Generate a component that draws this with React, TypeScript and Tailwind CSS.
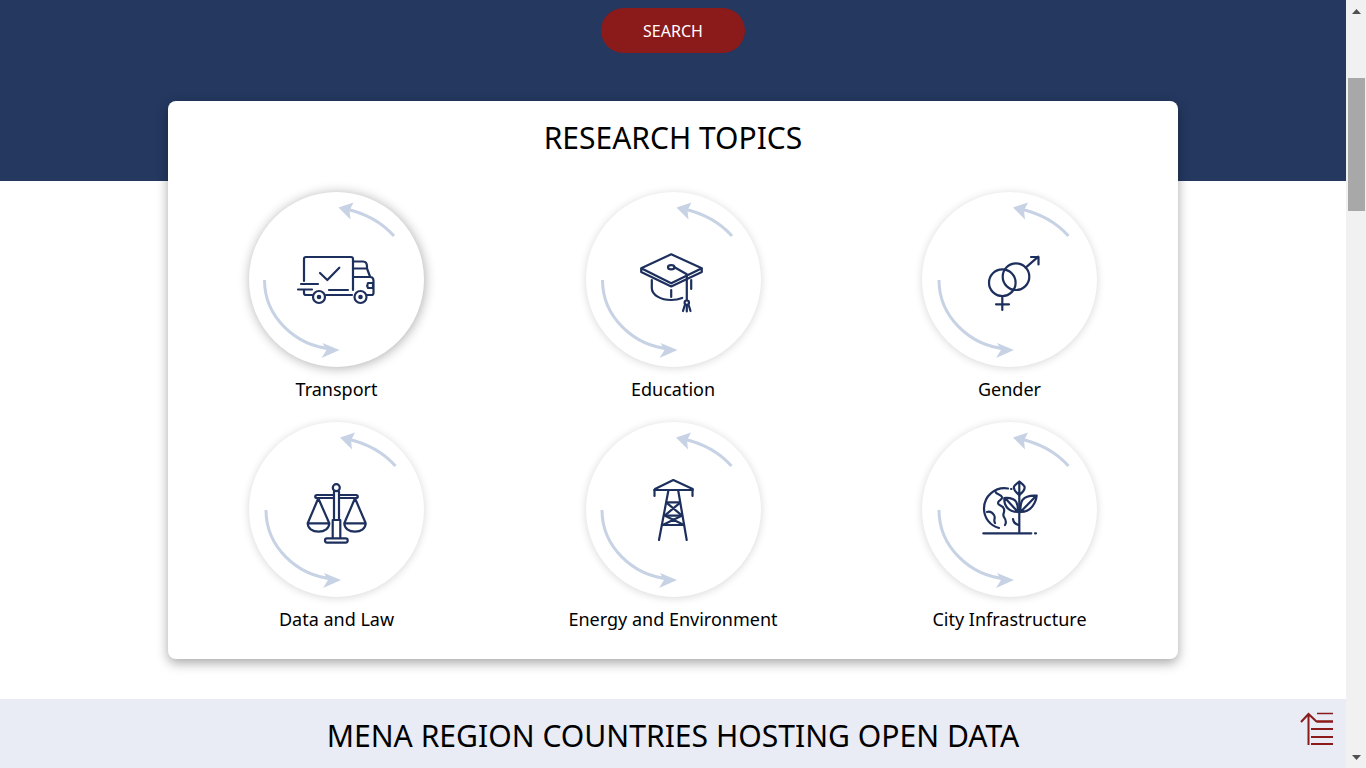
const NAVY = "#1d2f5c";

function TruckIcon() {
  return (
    <g transform="translate(41 53)">
      <path d="M14 36V14q0-2 2-2h45q2 0 2 2v31M11 39h17M8 44.500h14M14 45v3q0 2 2 2h7M39 45h19M36 50h26" />
      <path d="M63 16.500h10q4 0 4 5v2H63M77 23.500l3 8M63 32h17q3.500 0 3.500 4v12q0 2-2 2H77M78 38h5v5h-5q-1.500-2.500 0-5z" />
      <circle cx="29" cy="52" r="6" />
      <circle cx="29" cy="52" r="1.200" />
      <circle cx="70.500" cy="52" r="6" />
      <circle cx="70.500" cy="52" r="1.200" />
      <path d="M30 28l7.300 7 12-12.300" />
    </g>
  );
}

function CapIcon() {
  return (
    <g transform="translate(43.500 53)">
      <path d="M41.700 9.300l30.600 14-30.600 15-30-15zM11.700 23.300V27l30 14.500 30.600-14.500v-3.700" />
      <ellipse cx="41.700" cy="22.300" rx="3.200" ry="2.100" />
      <path d="M45 22.300l12.300 7V55" />
      <circle cx="57.300" cy="57.700" r="2.200" />
      <path d="M53.500 66l1.500-5M57.300 66.500V60M61 66l-1.500-5" />
      <path d="M22.300 35v8c0 7 9 12 19.400 12 4.500 0 8-.8 11-2M41.700 45v7M61.700 35v9" />
    </g>
  );
}

function GenderIcon() {
  return (
    <g transform="translate(53 53)">
      <circle cx="27.300" cy="37.700" r="13.300" />
      <circle cx="41" cy="31.700" r="13.300" />
      <path d="M50.700 22.700L63.300 11.700M56 12h7.500v7.500M27.300 51v14M21 59.300h13" />
    </g>
  );
}

function ScalesIcon() {
  return (
    <g transform="translate(46 53)">
      <circle cx="41.300" cy="12.700" r="3.500" />
      <path d="M39 16.500V45h-1.300v18M44 16.500V45h1.300v18" />
      <path d="M39 45h5" />
      <rect x="30" y="63.300" width="22.700" height="4.300" rx="2" />
      <path d="M39 20H22q-1.800 0-1.800 1.500T22 23h17M44 20h17q1.800 0 1.800 1.500T61 23H44" />
      <path d="M23.300 23.300L12.700 48.300h21.600zM12.700 48.300c0 5 4.500 8.400 10.800 8.400s10.800-3.400 10.800-8.400" />
      <path d="M60 23.300L49.300 48.300h21.400zM49.300 48.300c0 5 4.500 8.400 10.700 8.400s10.700-3.400 10.700-8.400" />
    </g>
  );
}

function TowerIcon() {
  return (
    <g transform="translate(54 53)">
      <path d="M15 14L33.300 5l19.400 9M14 15h39M14.500 15v6M52.500 15v6" />
      <path d="M28.300 16L19 65M38.300 16l8.400 49" />
      <path d="M27.300 27.300h12M25 40.700h16.700M22.700 50H44" />
      <path d="M27.300 28.300l14.400 12M39.300 28.300l-14.300 12M25 40.700L44 50M41.700 40.700L22.700 50" />
    </g>
  );
}

function EarthIcon() {
  return (
    <g transform="translate(53 53)">
      <path d="M8.300 58.300h48M60 58.300h1" />
      <path d="M33 13.500C20 11.500 9 21 9 33.500 9 43 15 50.500 24 53" />
      <path d="M20 16c1 4 6 3 7 6s-4 3-4 6 5 2 6 6-2 5 0 8 3 5 1 8M12 37c3-1 5 0 7 3s-1 5 1 8" />
      <path d="M36 14h.500M44.300 57V20" />
      <path d="M44.300 20c-4-3-6-6-5.300-8.500 1.200-2 3.500-3.500 5.300-5 1.800 1.500 4 3 5.200 5 .6 2.500-1.200 5.500-5.200 8.500zM44.300 7v13" />
      <path d="M43 37c-6 0-11-3-13-8-.6-2-.8-4-.7-6 5.500-.5 9.700.5 12 4 1.500 3 1.800 6 1.700 10zM30 23l13 14" />
      <path d="M45.500 37c6 .2 11-3 14-9 1.500-2.500 2-5 2.200-7.300-5.500-.5-11 .5-14 4-2 3-2.500 7-2.200 12.300zM61 21L45.500 37" />
      <path d="M44 50c-3-.5-5.500-2.500-6-6" />
    </g>
  );
}

const topics = [
  { label: "Transport", icon: <TruckIcon />, shift: 0.5, strong: true, nudge: "" },
  { label: "Education", icon: <CapIcon />, shift: 1.5, strong: false, nudge: "-ml-px" },
  { label: "Gender", icon: <GenderIcon />, shift: 2, strong: false, nudge: "" },
  { label: "Data and Law", icon: <ScalesIcon />, shift: 2, strong: false, nudge: "" },
  { label: "Energy and Environment", icon: <TowerIcon />, shift: 1, strong: false, nudge: "-ml-px" },
  { label: "City Infrastructure", icon: <EarthIcon />, shift: 2, strong: false, nudge: "" },
];

function TopicCircle({
  label,
  icon,
  shift,
  strong,
  nudge,
}: {
  label: string;
  icon: React.ReactNode;
  shift: number;
  strong: boolean;
  nudge: string;
}) {
  return (
    <div className="flex h-[230px] flex-col items-center">
      <div
        className={`h-[175px] w-[175px] rounded-full bg-white ${
          strong ? "shadow-[1px_1px_12px_rgba(0,0,0,0.32)]" : "shadow-[0_1px_8px_rgba(0,0,0,0.16)]"
        }`}
      >
        <svg width="175" height="175" viewBox="0 0 175 175" fill="none">
          {/* arrows going round the circle */}
          <g transform={`translate(${shift} 0)`} stroke="#c7d3e4" strokeWidth="3" fill="none">
            <path d="M144.500 44C131 29 115 21 96 17" />
            <path d="M15 88c0 36 30 66 68 69" />
          </g>
          <g transform={`translate(${shift} 0)`} fill="#c7d3e4">
            <path d="M89 15.500l15-5-4 8 1 9z" />
            <path d="M90 158l-17-7 4 7-5 8z" />
          </g>
          <g stroke={NAVY} strokeWidth="2.200" fill="none" strokeLinecap="round" strokeLinejoin="round">
            {icon}
          </g>
        </svg>
      </div>
      <p className={`mt-[9px] text-[18px] leading-[26px] text-black ${nudge}`}>{label}</p>
    </div>
  );
}

function Scrollbar() {
  return (
    <div className="flex h-full w-5 shrink-0 flex-col items-start bg-[#f1f1f1] pb-2 pl-[2px] pt-[9px]">
      <svg width="17" height="5" viewBox="0 0 17 5" className="shrink-0">
        <path d="M4 5l4.500-5L13 5z" fill="#505050" />
      </svg>
      <div className="mt-16 h-[133px] w-[17px] bg-[#a8a8a8]" />
      <svg width="17" height="5" viewBox="0 0 17 5" className="mt-auto shrink-0">
        <path d="M4 0h9L8.500 5z" fill="#505050" />
      </svg>
    </div>
  );
}

export default function App() {
  return (
    <div className="flex h-screen overflow-hidden bg-white font-['Noto_Sans',sans-serif]">
      <main className="relative min-w-0 flex-1 overflow-hidden">
        <section className="flex h-[181px] justify-center bg-[#243860] pt-2">
          <button className="h-[45px] w-[144px] rounded-full bg-[#8b1a1a] text-base text-white">SEARCH</button>
        </section>

        <section className="relative mx-auto -mt-[80px] h-[558px] w-[1010px] rounded-lg bg-white pt-[17px] shadow-[0_4px_12px_rgba(0,0,0,0.35)]">
          <h2 className="text-center text-[30px] leading-[40px] text-black">RESEARCH TOPICS</h2>
          <div className="mt-[34px] grid grid-cols-[337px_337px_335px]">
            {topics.map((t) => (
              <TopicCircle key={t.label} {...t} />
            ))}
          </div>
        </section>

        <section className="mt-10 h-[200px] bg-[#e9ebf5] pt-[17px]">
          <h2 className="text-center text-[30.1px] leading-[40px] text-black">MENA REGION COUNTRIES HOSTING OPEN DATA</h2>
        </section>

        {/* back to top */}
        <button className="absolute bottom-[22px] right-[12px]">
          <svg width="34" height="34" viewBox="0 0 34 34" fill="none" stroke="#8b1a1a" className="block">
            <path d="M8.500 33V2M1 10l7.500-8L17 10" strokeWidth="2" />
            <path d="M17 1.500h16" strokeWidth="1.500" />
            <path d="M17 9.500h16" strokeWidth="2.500" />
            <path d="M11 17h22M11 25h22M11 32h22" strokeWidth="1.800" />
          </svg>
        </button>
      </main>
      <Scrollbar />
    </div>
  );
}
